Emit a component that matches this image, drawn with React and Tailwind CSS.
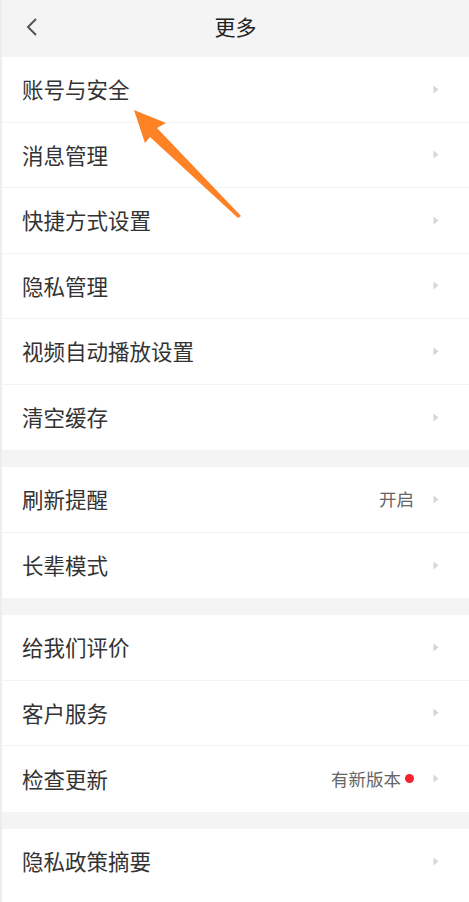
const GROUPS = [
  ['账号与安全', '消息管理', '快捷方式设置', '隐私管理', '视频自动播放设置', '清空缓存'],
  [{ label: '刷新提醒', value: '开启' }, '长辈模式'],
  ['给我们评价', '客户服务', { label: '检查更新', value: '有新版本', dot: true }],
  ['隐私政策摘要'],
]

function Chevron() {
  return (
    <svg width="6" height="9" viewBox="0 0 6 9" className="ml-[19px] mr-[30px] shrink-0">
      <path d="M0.5 0.5 L5.5 4.5 L0.5 8.5 Z" fill="#d6d6d6" />
    </svg>
  )
}

function Row({ item, last }) {
  const data = typeof item === 'string' ? { label: item } : item
  return (
    <div className="flex h-[65.5px] items-center bg-white">
      <div
        className={`flex h-full flex-1 items-center pl-[20px] ${last ? '' : 'border-b border-[#f3f3f3]'}`}
      >
        <span className="flex-1 text-[21.5px] text-[#333]">{data.label}</span>
        {data.value && <span className="text-[17.5px] text-[#666]">{data.value}</span>}
        {data.dot && <span className="ml-[4px] h-[9px] w-[9px] rounded-full bg-[#f5222d]" />}
        <Chevron />
      </div>
    </div>
  )
}

export default function App() {
  return (
    <div
      className="relative flex h-[902px] w-[469px] flex-col overflow-hidden border-l-2 border-[#ededed] bg-[#f4f4f4]"
      style={{ fontFamily: '"Noto Sans CJK SC", "Noto Sans", sans-serif' }}
    >
      {/* Header */}
      <div className="relative flex h-[57px] shrink-0 items-center justify-center bg-[#f4f4f4] pb-[4px]">
        <svg width="14" height="20" viewBox="0 0 14 20" className="absolute left-[23px] top-[17px]">
          <path d="M11 2 L3 10 L11 18" fill="none" stroke="#555" strokeWidth="2" />
        </svg>
        <span className="text-[21px] text-[#222]">更多</span>
      </div>

      <div className="flex flex-1 flex-col gap-[17px]">
        {GROUPS.map((group, gi) => (
          <div key={gi} className={`flex flex-col ${gi === GROUPS.length - 1 ? 'flex-1 bg-white' : ''}`}>
            {group.map((item, i) => (
              <Row key={i} item={item} last={i === group.length - 1} />
            ))}
          </div>
        ))}
      </div>

      {/* Annotation arrow */}
      <svg width="469" height="902" className="pointer-events-none absolute left-0 top-0">
        <path
          d="M132 110 L164 123 L155 128 L239 216 L236 218 L148 137 L143 143 Z"
          fill="#fd8125"
        />
      </svg>
    </div>
  )
}
